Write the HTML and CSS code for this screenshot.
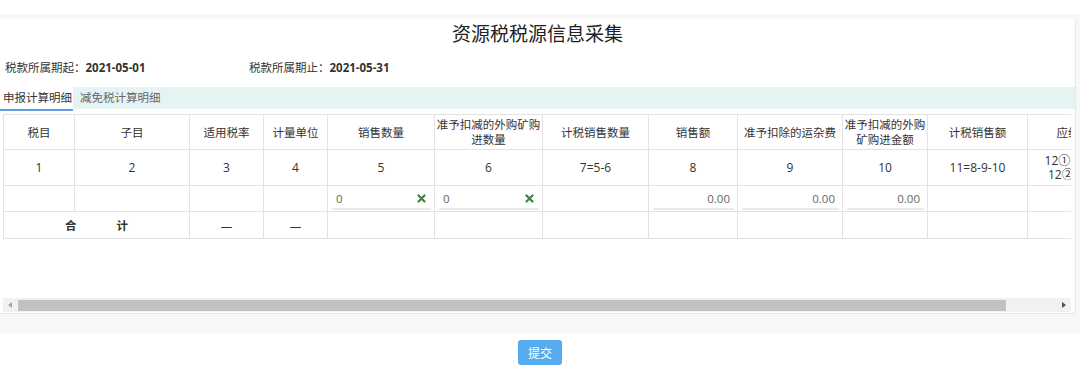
FILE: index.html
```html
<!DOCTYPE html>
<html lang="zh-CN">
<head>
    <meta charset="UTF-8">
    <meta name="viewport" content="width=device-width, initial-scale=1.0">
    <title>资源税税源信息采集</title>
    <link rel="stylesheet" href="styles.css">
</head>
<body>
    <div class="strip"></div>

    <div class="wrap">
        <div class="panel">
            <h1 class="title">资源税税源信息采集</h1>

            <div class="info">
                <div class="info-item">税款所属期起<span class="colon">：</span><b>2021-05-01</b></div>
                <div class="info-item">税款所属期止<span class="colon">：</span><b>2021-05-31</b></div>
            </div>

            <div class="tabs">
                <div class="tab active">申报计算明细</div>
                <div class="tab">减免税计算明细</div>
            </div>

            <div class="scroll-box">
                <div class="table-view">
                    <table class="grid">
                        <colgroup>
                            <col style="width:71px">
                            <col style="width:115px">
                            <col style="width:74px">
                            <col style="width:64px">
                            <col style="width:107px">
                            <col style="width:108px">
                            <col style="width:106px">
                            <col style="width:89px">
                            <col style="width:105px">
                            <col style="width:85px">
                            <col style="width:100px">
                            <col style="width:104px">
                            <col style="width:100px">
                            <col style="width:100px">
                        </colgroup>
                        <tr class="head">
                            <th>税目</th>
                            <th>子目</th>
                            <th>适用税率</th>
                            <th>计量单位</th>
                            <th>销售数量</th>
                            <th>准予扣减的外购矿购进数量</th>
                            <th>计税销售数量</th>
                            <th>销售额</th>
                            <th>准予扣除的运杂费</th>
                            <th>准予扣减的外购矿购进金额</th>
                            <th>计税销售额</th>
                            <th>应纳税额</th>
                            <th>减免税额</th>
                            <th>已缴税额</th>
                        </tr>
                        <tr class="nums">
                            <td>1</td>
                            <td>2</td>
                            <td>3</td>
                            <td>4</td>
                            <td>5</td>
                            <td>6</td>
                            <td>7=5-6</td>
                            <td>8</td>
                            <td>9</td>
                            <td>10</td>
                            <td>11=8-9-10</td>
                            <td>12①=11×3%<br>12②=7×3%</td>
                            <td>13</td>
                            <td>14</td>
                        </tr>
                        <tr class="edit">
                            <td></td>
                            <td></td>
                            <td></td>
                            <td></td>
                            <td>
                                <div class="field">
                                    <input type="text" value="0">
                                    <svg class="clear" width="9" height="9" viewBox="0 0 9 9"><path d="M1.5 1.5 L7.5 7.5 M7.5 1.5 L1.5 7.5" stroke="#3f7f3f" stroke-width="2.2" stroke-linecap="round"/></svg>
                                </div>
                            </td>
                            <td>
                                <div class="field">
                                    <input type="text" value="0">
                                    <svg class="clear" width="9" height="9" viewBox="0 0 9 9"><path d="M1.5 1.5 L7.5 7.5 M7.5 1.5 L1.5 7.5" stroke="#3f7f3f" stroke-width="2.2" stroke-linecap="round"/></svg>
                                </div>
                            </td>
                            <td></td>
                            <td><div class="field num"><input type="text" value="0.00"></div></td>
                            <td><div class="field num"><input type="text" value="0.00"></div></td>
                            <td><div class="field num"><input type="text" value="0.00"></div></td>
                            <td></td>
                            <td></td>
                            <td></td>
                            <td></td>
                        </tr>
                        <tr class="total">
                            <td colspan="2"><b>合<i class="gap"></i>计</b></td>
                            <td>—</td>
                            <td>—</td>
                            <td></td>
                            <td></td>
                            <td></td>
                            <td></td>
                            <td></td>
                            <td></td>
                            <td></td>
                            <td></td>
                            <td></td>
                            <td></td>
                        </tr>
                    </table>
                </div>

                <div class="hbar">
                    <span class="arrow left"></span>
                    <span class="track"><span class="thumb"></span></span>
                    <span class="arrow right"></span>
                </div>
            </div>
        </div>
    </div>

    <div class="footer">
        <button type="button" class="btn">提交</button>
    </div>
</body>
</html>
```

FILE: styles.css
```css
body {
    margin: 0;
    font-family: "Open Sans", "Noto Sans CJK SC", sans-serif;
    font-size: 11.5px;
    color: #333;
    background-color: #fff;
}
.strip {
    height: 14px;
}
.wrap {
    background-color: #f7f7f7;
    padding: 5px 4px 19px 0;
}
.panel {
    background: #fff;
    border-right: 1px solid #e6e6e6;
    border-bottom: 1px solid #e6e6e6;
    border-radius: 0 4px 4px 0;
    padding-bottom: 1px;
}
.title {
    margin: 0;
    font-family: "Noto Sans CJK SC", sans-serif;
    font-size: 19px;
    font-weight: normal;
    line-height: 28px;
    text-align: center;
    color: #222;
}
.info {
    display: flex;
    margin-top: 10px;
    padding-left: 5px;
    line-height: 20px;
}
.info-item {
    width: 244px;
}
.info-item b {
    font-weight: bold;
}
.colon {
    font-family: "Noto Sans CJK TC", sans-serif;
}
.tabs {
    display: flex;
    align-items: flex-start;
    margin-top: 9px;
}
.tab {
    height: 22px;
    line-height: 22px;
    color: #666;
}
.tab.active {
    width: 70px;
    padding-left: 3px;
    color: #333;
    border-bottom: 2px solid #5b9ae0;
}
.tab + .tab {
    flex: 1;
    padding-left: 7px;
    background-color: #e5f3f3;
}
.scroll-box {
    margin: 3px 4px 0 3px;
}
.table-view {
    height: 184px;
    overflow: hidden;
}
.grid {
    border-collapse: collapse;
    table-layout: fixed;
    width: 1328px;
}
.grid th, .grid td {
    border: 1px solid #e3e3e3;
    text-align: center;
    font-weight: normal;
    padding: 0 1px;
}
.head th {
    height: 34px;
    line-height: 15px;
}
.nums td {
    height: 35px;
    line-height: 14px;
    font-size: 12px;
}
.edit td {
    height: 21px;
    padding: 3px 3px 1px 4px;
}
.total td {
    height: 26px;
}
.gap {
    display: inline-block;
    width: 40px;
}
.field {
    display: flex;
    align-items: center;
    height: 18px;
    border-bottom: 2px solid #ebebeb;
}
.field input {
    flex: 1;
    min-width: 0;
    border: 0;
    outline: 0;
    padding: 0 4px;
    background: transparent;
    font: inherit;
    color: #666;
}
.field.num input {
    text-align: right;
}
.clear {
    margin-right: 5px;
}
.hbar {
    display: flex;
    height: 14px;
    background-color: #f1f1f1;
}
.arrow {
    width: 14px;
    display: flex;
    align-items: center;
    justify-content: center;
}
.arrow::before {
    content: "";
    border-top: 3px solid transparent;
    border-bottom: 3px solid transparent;
}
.arrow.left::before {
    border-right: 4px solid #a3a3a3;
}
.arrow.right::before {
    border-left: 4px solid #505050;
}
.track {
    flex: 1;
}
.thumb {
    display: block;
    width: 988px;
    height: 11px;
    margin: 2px 0 0 1px;
    background-color: #c1c1c1;
}
.footer {
    text-align: center;
    padding-top: 7px;
}
.btn {
    width: 44px;
    height: 25px;
    border: none;
    border-radius: 3px;
    background-color: #55acee;
    color: white;
    font-family: "Noto Sans CJK SC", sans-serif;
    font-size: 12px;
    cursor: pointer;
}
```
